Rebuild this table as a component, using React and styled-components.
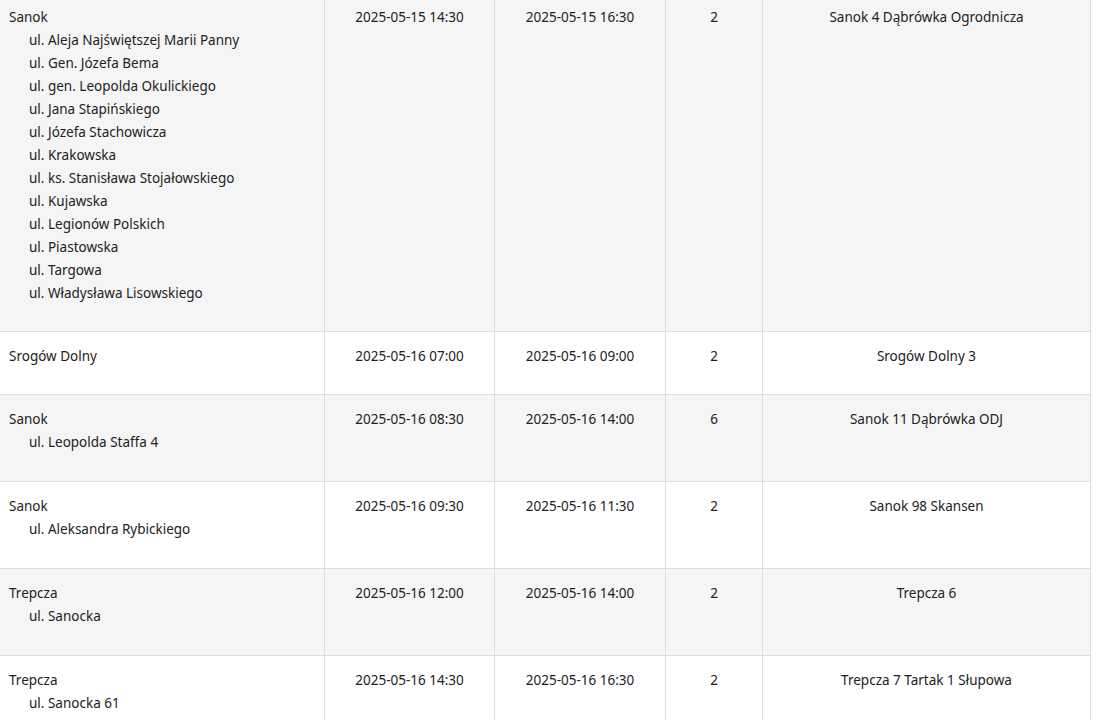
import React from "react";
import styled, { createGlobalStyle } from "styled-components";

const Global = createGlobalStyle`
  html, body { margin: 0; padding: 0; background: #ffffff; }
  body { font-family: "Noto Sans", "Open Sans", sans-serif; color: #222222; }
`;

const Table = styled.table`
  width: 1091px;
  margin: -8px 0 0 -1px;
  border-collapse: collapse;
  table-layout: fixed;
  font-size: 13.5px;
  line-height: 23px;
`;

const Col = styled.col`
  width: ${(p) => p.$w}px;
`;

const Row = styled.tr`
  background: ${(p) => (p.$shade ? "#f5f5f5" : "#ffffff")};
`;

const Cell = styled.td`
  border: 1px solid #dddddd;
  vertical-align: top;
  padding: 13px 9px 26px;
  text-align: ${(p) => (p.$left ? "left" : "center")};
`;

const StreetList = styled.div`
  padding-bottom: ${(p) => (p.$short ? 1 : 0)}px;
`;

const Street = styled.div`
  padding-left: 20px;
`;

const columns = [325, 170, 171, 97, 328];

const rows = [
  {
    place: "Sanok",
    streets: [
      "ul. Aleja Najświętszej Marii Panny",
      "ul. Gen. Józefa Bema",
      "ul. gen. Leopolda Okulickiego",
      "ul. Jana Stapińskiego",
      "ul. Józefa Stachowicza",
      "ul. Krakowska",
      "ul. ks. Stanisława Stojałowskiego",
      "ul. Kujawska",
      "ul. Legionów Polskich",
      "ul. Piastowska",
      "ul. Targowa",
      "ul. Władysława Lisowskiego",
    ],
    from: "2025-05-15 14:30",
    to: "2025-05-15 16:30",
    n: "2",
    station: "Sanok 4 Dąbrówka Ogrodnicza",
  },
  { place: "Srogów Dolny", streets: [], from: "2025-05-16 07:00", to: "2025-05-16 09:00", n: "2", station: "Srogów Dolny 3" },
  { place: "Sanok", streets: ["ul. Leopolda Staffa 4"], from: "2025-05-16 08:30", to: "2025-05-16 14:00", n: "6", station: "Sanok 11 Dąbrówka ODJ" },
  { place: "Sanok", streets: ["ul. Aleksandra Rybickiego"], from: "2025-05-16 09:30", to: "2025-05-16 11:30", n: "2", station: "Sanok 98 Skansen" },
  { place: "Trepcza", streets: ["ul. Sanocka"], from: "2025-05-16 12:00", to: "2025-05-16 14:00", n: "2", station: "Trepcza 6" },
  { place: "Trepcza", streets: ["ul. Sanocka 61"], from: "2025-05-16 14:30", to: "2025-05-16 16:30", n: "2", station: "Trepcza 7 Tartak 1 Słupowa" },
];

export default function App() {
  return (
    <>
      <Global />
      <Table>
        <colgroup>
          {columns.map((w, i) => (
            <Col key={i} $w={w} />
          ))}
        </colgroup>
        <tbody>
          {rows.map((r, i) => (
            <Row key={i} $shade={i % 2 === 0}>
              <Cell $left>
                {r.place}
                {r.streets.length > 0 && (
                  <StreetList $short={r.streets.length === 1}>
                    {r.streets.map((s) => (
                      <Street key={s}>{s}</Street>
                    ))}
                  </StreetList>
                )}
              </Cell>
              <Cell>{r.from}</Cell>
              <Cell>{r.to}</Cell>
              <Cell>{r.n}</Cell>
              <Cell>{r.station}</Cell>
            </Row>
          ))}
        </tbody>
      </Table>
    </>
  );
}
